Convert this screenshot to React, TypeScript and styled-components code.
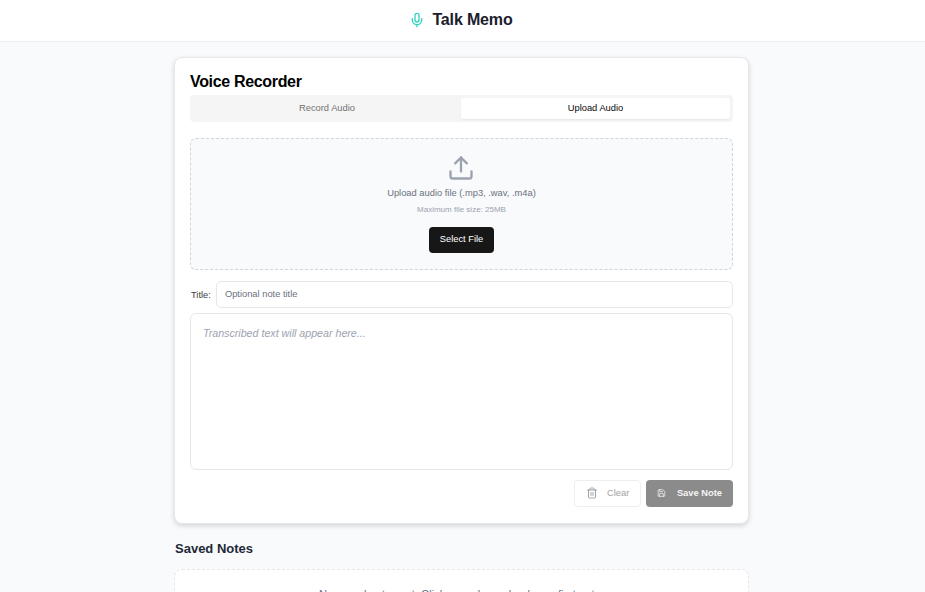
import React from "react";
import styled, { createGlobalStyle } from "styled-components";
import { Mic, Upload, Trash2, Save } from "lucide-react";

const GlobalStyle = createGlobalStyle`
  html, body {
    margin: 0;
    padding: 0;
    height: 592px;
    overflow: hidden;
    background: #f8fafc;
    font-family: "Liberation Sans", Arial, sans-serif;
  }
  * {
    box-sizing: border-box;
  }
`;

const App: React.FC = () => {
  return (
    <Page>
      <GlobalStyle />
      <Header>
        <MicIcon size={16} strokeWidth={2} />
        <Logo>Talk Memo</Logo>
      </Header>
      <Main>
        <Card>
          <CardTitle>Voice Recorder</CardTitle>
          <TabList>
            <Tab>Record Audio</Tab>
            <Tab active>Upload Audio</Tab>
          </TabList>
          <DropZone>
            <UploadIcon size={28} strokeWidth={2} />
            <DropText>Upload audio file (.mp3, .wav, .m4a)</DropText>
            <DropHint>Maximum file size: 25MB</DropHint>
            <SelectButton>Select File</SelectButton>
          </DropZone>
          <TitleRow>
            <TitleLabel>Title:</TitleLabel>
            <TitleInput placeholder="Optional note title" />
          </TitleRow>
          <TranscriptBox>
            <Placeholder>Transcribed text will appear here...</Placeholder>
          </TranscriptBox>
          <Actions>
            <ClearButton>
              <Trash2 size={12} />
              Clear
            </ClearButton>
            <SaveButton>
              <Save size={12} />
              Save Note
            </SaveButton>
          </Actions>
        </Card>
        <SavedTitle>Saved Notes</SavedTitle>
        <EmptyNotes>No saved notes yet. Click record or upload your first note.</EmptyNotes>
      </Main>
    </Page>
  );
};

const Page = styled.div`
  min-height: 592px;
  background: #f8fafc;
`;

const Header = styled.header`
  display: flex;
  align-items: center;
  justify-content: center;
  gap: 7px;
  height: 42px;
  padding: 0 3px 1px 0;
  background: #fff;
  border-bottom: 1px solid #eef0f2;
`;

const MicIcon = styled(Mic)`
  color: #2dd4bf;
`;

const Logo = styled.h1`
  margin: 0;
  font-size: 16px;
  line-height: 24px;
  font-weight: 700;
  letter-spacing: -0.15px;
  color: #1a202c;
`;

const Main = styled.main`
  width: 575px;
  margin-left: 174px;
  padding-top: 15px;
`;

const Card = styled.section`
  height: 467px;
  padding: 14px 15px 16px;
  background: #fff;
  border: 1px solid #e5e7eb;
  border-radius: 8px;
  box-shadow: 0 2px 5px rgba(0, 0, 0, 0.15);
`;

const CardTitle = styled.h2`
  margin: 0;
  font-size: 16px;
  line-height: 20px;
  font-weight: 700;
  letter-spacing: -0.33px;
  color: #000;
`;

const TabList = styled.div`
  display: grid;
  grid-template-columns: 268fr 269fr;
  height: 27px;
  margin-top: 3px;
  padding: 3px;
  background: #f5f5f5;
  border-radius: 4px;
`;

const Tab = styled.div<{ active?: boolean }>`
  display: flex;
  align-items: center;
  justify-content: center;
  padding-bottom: 1px;
  font-size: 9.33px;
  color: ${(props) => (props.active ? "#0a0a0a" : "#737373")};
  background: ${(props) => (props.active ? "#fff" : "transparent")};
  border-radius: 3px;
  box-shadow: ${(props) => (props.active ? "0 1px 2px rgba(0, 0, 0, 0.06)" : "none")};
`;

const DropZone = styled.div`
  display: flex;
  flex-direction: column;
  align-items: center;
  height: 132px;
  margin-top: 16px;
  padding-top: 15px;
  background: #f8fafc;
  border: 1px dashed #d1d5db;
  border-radius: 6px;
`;

const UploadIcon = styled(Upload)`
  margin-right: 1px;
  color: #9ca3af;
`;

const DropText = styled.p`
  margin: 5px 0 0;
  font-size: 9.33px;
  line-height: 12px;
  color: #6b7280;
`;

const DropHint = styled.p`
  margin: 5px 0 0;
  font-size: 8px;
  line-height: 12px;
  color: #9ca3af;
`;

const SelectButton = styled.button`
  width: 65px;
  height: 26px;
  margin-top: 11px;
  padding: 0 0 2px;
  font: inherit;
  font-size: 9.33px;
  font-weight: 500;
  color: #fff;
  background: #171717;
  border: 0;
  border-radius: 4px;
`;

const TitleRow = styled.div`
  display: flex;
  align-items: center;
  gap: 5px;
  margin-top: 11px;
`;

const TitleLabel = styled.label`
  margin-left: 1px;
  font-size: 9.33px;
  color: #404040;
`;

const TitleInput = styled.input`
  flex: 1;
  height: 27px;
  padding: 0 8px 1px;
  font: inherit;
  font-size: 9.33px;
  background: #fff;
  border: 1px solid #e5e7eb;
  border-radius: 5px;
  &::placeholder {
    color: #6b7280;
  }
`;

const TranscriptBox = styled.div`
  height: 157px;
  margin-top: 5px;
  padding: 10px 12px;
  line-height: 16px;
  background: #fff;
  border: 1px solid #e5e7eb;
  border-radius: 6px;
`;

const Placeholder = styled.span`
  font-size: 10.67px;
  font-style: italic;
  color: #9ca3af;
`;

const Actions = styled.div`
  display: flex;
  justify-content: flex-end;
  gap: 5px;
  margin-top: 10px;
`;

const ClearButton = styled.button`
  display: flex;
  align-items: center;
  gap: 9px;
  width: 67px;
  height: 27px;
  padding: 0 10px 1px 11px;
  font: inherit;
  font-size: 9.33px;
  white-space: nowrap;
  color: #a3a3a3;
  background: #fff;
  border: 1px solid #eeeeee;
  border-radius: 4px;
`;

const SaveButton = styled.button`
  display: flex;
  align-items: center;
  gap: 11px;
  width: 87px;
  height: 27px;
  padding: 0 11px 2px;
  font: inherit;
  font-size: 9.33px;
  font-weight: 700;
  white-space: nowrap;
  color: #f5f5f5;
  background: #8b8b8b;
  border: 0;
  border-radius: 4px;
`;

const SavedTitle = styled.h3`
  margin: 16px 0 0 1px;
  font-size: 13px;
  line-height: 18px;
  font-weight: 700;
  color: #1f2937;
`;

const EmptyNotes = styled.div`
  height: 80px;
  margin-top: 11px;
  padding-top: 18px;
  font-size: 11.2px;
  text-align: center;
  color: #6b7280;
  background: #fff;
  border: 1px dashed #e5e7eb;
  border-radius: 8px;
`;

export default App;
